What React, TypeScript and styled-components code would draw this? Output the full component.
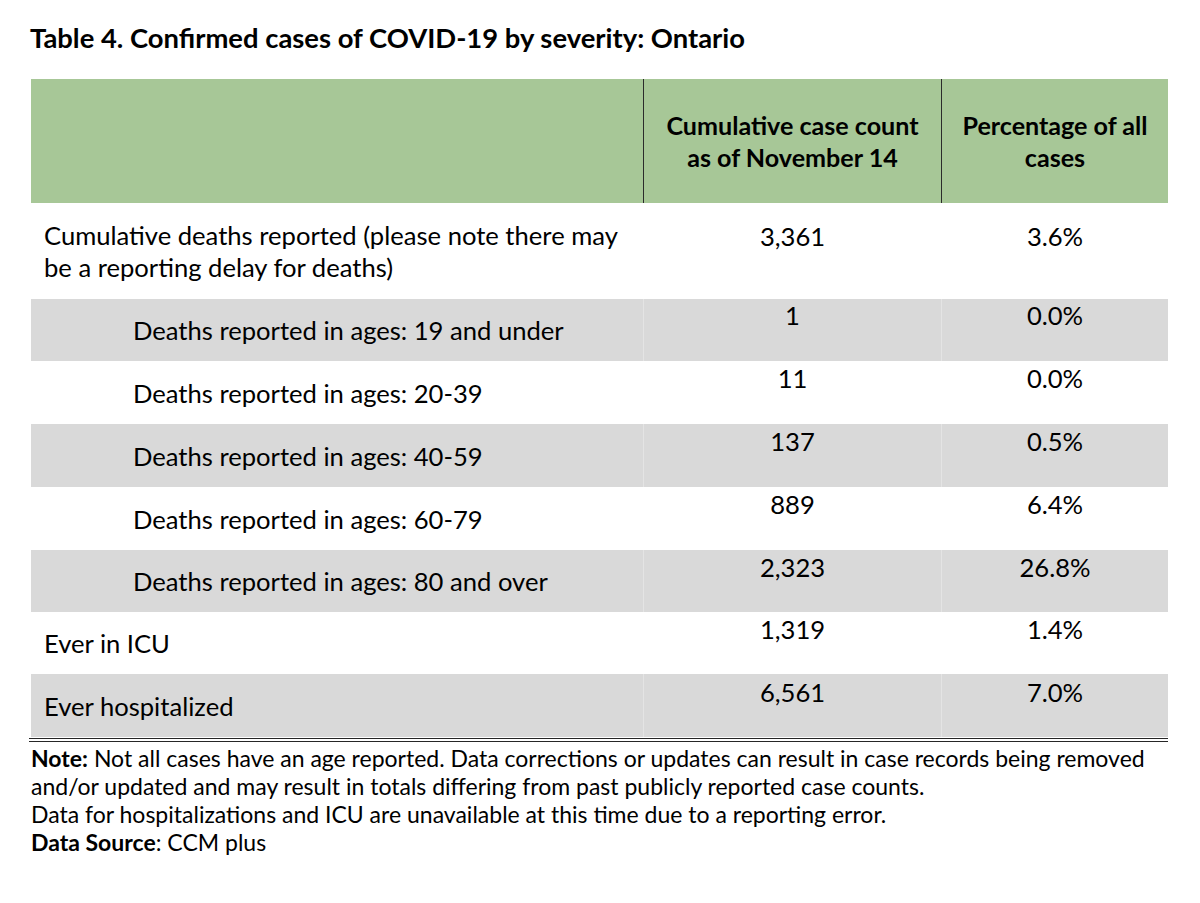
import React from 'react'
import styled, { createGlobalStyle } from 'styled-components'

const FONT = `Lato, "Open Sans", "Liberation Sans", sans-serif`

const GlobalStyle = createGlobalStyle`
  html, body {
    margin: 0;
    padding: 0;
    background: #ffffff;
  }
  body {
    font-family: ${FONT};
    color: #000000;
  }
`

const Page = styled.div`
  width: 1200px;
  height: 903px;
  box-sizing: border-box;
  padding: 20px 0 0 31px;
  overflow: hidden;
`

const Title = styled.h1`
  margin: 0 0 23px -1px;
  font-size: 27.4px;
  line-height: 36px;
  font-weight: 700;
`

const Table = styled.div`
  width: 1137px;
`

const HeaderRow = styled.div`
  display: grid;
  grid-template-columns: 612px 298px 227px;
  height: 124px;
  background: #a7c797;
`

const HeaderCell = styled.div<{ divider?: boolean }>`
  display: flex;
  align-items: center;
  justify-content: center;
  text-align: center;
  font-weight: 700;
  font-size: 25.1px;
  line-height: 32px;
  border-left: ${({ divider }) => (divider ? '1px solid #2b2b2b' : 'none')};
`

const Row = styled.div<{ h: number; shaded?: boolean }>`
  display: grid;
  grid-template-columns: 612px 298px 227px;
  height: ${({ h }) => h}px;
  background: ${({ shaded }) => (shaded ? '#d9d9d9' : '#ffffff')};
`

const LabelCell = styled.div<{ indent: number }>`
  display: flex;
  align-items: center;
  padding-left: ${({ indent }) => indent}px;
  font-size: 25.6px;
  line-height: 32px;
`

const ValueCell = styled.div<{ top: number; shaded?: boolean }>`
  padding-top: ${({ top }) => top}px;
  text-align: center;
  font-size: 25.6px;
  line-height: 32px;
  border-left: 1px solid ${({ shaded }) => (shaded ? '#e4e4e4' : '#ffffff')};
`

const DoubleRule = styled.div`
  margin: 1px 0 0 -2px;
  width: 1139px;
  height: 2px;
  border-top: 1px solid #262626;
  border-bottom: 1px solid #262626;
`

const Notes = styled.div`
  margin-top: 2px;
  font-size: 23px;
  line-height: 28px;
`

const NoteLine = styled.div`
  white-space: nowrap;
`

const rows = [
  { label: 'Cumulative deaths reported (please note there may be a reporting delay for deaths)', count: '3,361', pct: '3.6%', h: 96, indent: 13, top: 17, shaded: false },
  { label: 'Deaths reported in ages: 19 and under', count: '1', pct: '0.0%', h: 62, indent: 102, top: 0, shaded: true },
  { label: 'Deaths reported in ages: 20-39', count: '11', pct: '0.0%', h: 63, indent: 102, top: 1, shaded: false },
  { label: 'Deaths reported in ages: 40-59', count: '137', pct: '0.5%', h: 63, indent: 102, top: 1, shaded: true },
  { label: 'Deaths reported in ages: 60-79', count: '889', pct: '6.4%', h: 63, indent: 102, top: 1, shaded: false },
  { label: 'Deaths reported in ages: 80 and over', count: '2,323', pct: '26.8%', h: 62, indent: 102, top: 1, shaded: true },
  { label: 'Ever in ICU', count: '1,319', pct: '1.4%', h: 62, indent: 13, top: 1, shaded: false },
  { label: 'Ever hospitalized', count: '6,561', pct: '7.0%', h: 63, indent: 13, top: 2, shaded: true },
]

export default function App() {
  return (
    <>
      <GlobalStyle />
      <Page>
        <Title>Table 4. Confirmed cases of COVID-19 by severity: Ontario</Title>
        <Table>
          <HeaderRow>
            <HeaderCell />
            <HeaderCell divider>Cumulative case count<br />as of November 14</HeaderCell>
            <HeaderCell divider>Percentage of all<br />cases</HeaderCell>
          </HeaderRow>
          {rows.map((r) => (
            <Row key={r.label} h={r.h} shaded={r.shaded}>
              <LabelCell indent={r.indent}>
                {r.h > 90 ? (
                  <span>Cumulative deaths reported (please note there may<br />be a reporting delay for deaths)</span>
                ) : (
                  r.label
                )}
              </LabelCell>
              <ValueCell top={r.top} shaded={r.shaded}>{r.count}</ValueCell>
              <ValueCell top={r.top} shaded={r.shaded}>{r.pct}</ValueCell>
            </Row>
          ))}
        </Table>
        <DoubleRule />
        <Notes>
          <NoteLine><b>Note:</b> Not all cases have an age reported. Data corrections or updates can result in case records being removed</NoteLine>
          <NoteLine>and/or updated and may result in totals differing from past publicly reported case counts.</NoteLine>
          <NoteLine>Data for hospitalizations and ICU are unavailable at this time due to a reporting error.</NoteLine>
          <NoteLine><b>Data Source</b>: CCM plus</NoteLine>
        </Notes>
      </Page>
    </>
  )
}
